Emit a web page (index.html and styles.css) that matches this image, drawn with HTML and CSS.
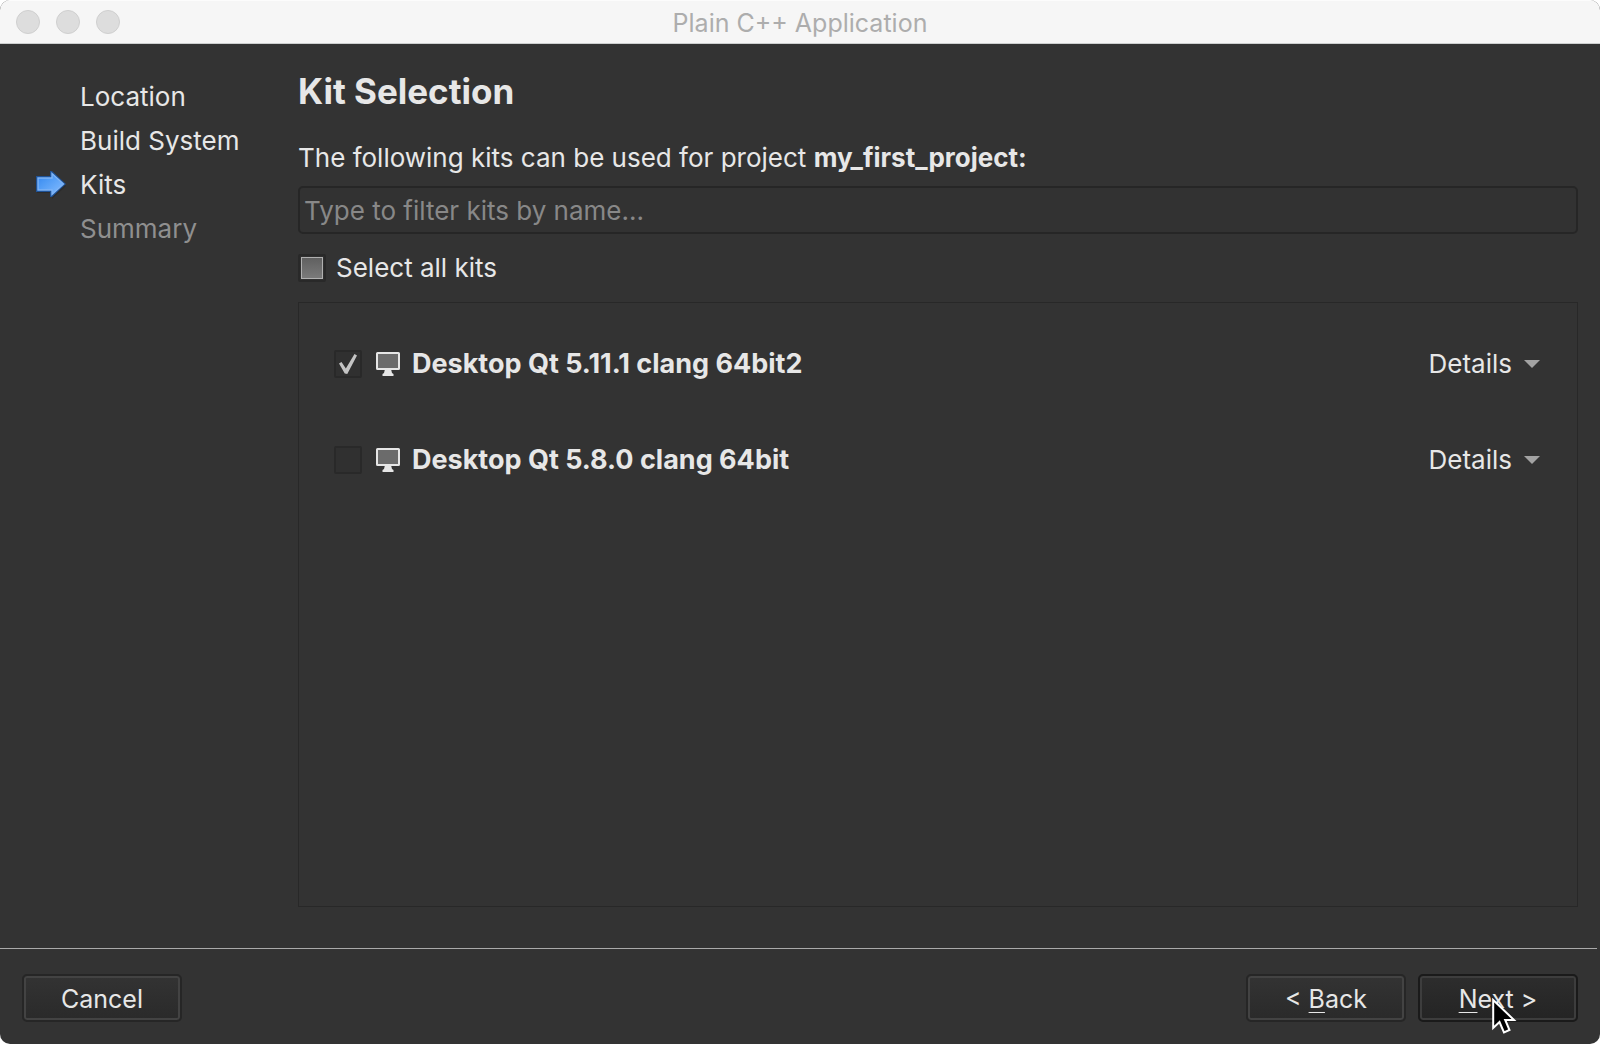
FILE: index.html
```html
<!DOCTYPE html>
<html lang="en">
<head>
<meta charset="utf-8">
<meta name="viewport" content="width=device-width, initial-scale=1">
<title>Plain C++ Application</title>
<link rel="stylesheet" href="styles.css">
</head>
<body>
<div class="window">
  <header class="titlebar">
    <div class="lights"><span class="light"></span><span class="light"></span><span class="light"></span></div>
    <div class="window-title">Plain C++ Application</div>
  </header>
  <div class="body">
    <nav class="steps" aria-label="Wizard steps">
      <ol class="step-list">
        <li class="step">Location</li>
        <li class="step">Build System</li>
        <li class="step current" aria-current="step">
          <svg class="step-arrow" width="32" height="30" viewBox="0 1 32 30" aria-hidden="true">
            <defs><linearGradient id="arrow-fill" x1="0" y1="0" x2="1" y2="1"><stop offset="0" stop-color="#3385ef"/><stop offset="0.35" stop-color="#4f9bf5"/><stop offset="1" stop-color="#86bdff"/></linearGradient></defs>
            <path d="M1 10H15V5L30 17L16 30V24H1Z" fill="#242424" opacity="0.5"/>
            <path d="M0 7H14V2H16L30 15L16 28H14V23H0Z" fill="#1f5296"/>
            <path d="M2 9H16V4.500L27.500 15L16 25.500V21H2Z" fill="url(#arrow-fill)" stroke="#7fb4f5" stroke-width="1.400"/>
          </svg>
          Kits
        </li>
        <li class="step pending">Summary</li>
      </ol>
    </nav>
    <main class="page">
      <h1 class="heading">Kit Selection</h1>
      <label class="intro" for="filter">The following kits can be used for project <b>my_first_project:</b></label>
      <input class="filter" id="filter" type="text" placeholder="Type to filter kits by name...">
      <div class="select-all">
        <input class="check" type="checkbox" id="all">
        <label for="all">Select all kits</label>
      </div>
      <ul class="kits">
        <li class="kit">
          <input class="check" type="checkbox" id="kit-1" checked>
          <label class="kit-name" for="kit-1">
            <svg class="monitor" width="24" height="24" viewBox="0 0 24 24" aria-hidden="true"><rect x="1" y="1" width="22" height="16" rx="0.500" fill="#6b6b6b" stroke="#e6e6e6" stroke-width="2"/><path d="M9 17H15L16 21L17.500 22V24H6.500V22L8 21Z" fill="#e6e6e6"/></svg>
            Desktop Qt 5.11.1 clang 64bit2
          </label>
          <button class="details" type="button">Details <svg width="16" height="8" viewBox="0 0 16 8" aria-hidden="true"><path d="M0 0H16L8 8Z" fill="#a3a3a3"/></svg></button>
        </li>
        <li class="kit">
          <input class="check" type="checkbox" id="kit-2">
          <label class="kit-name" for="kit-2">
            <svg class="monitor" width="24" height="24" viewBox="0 0 24 24" aria-hidden="true"><rect x="1" y="1" width="22" height="16" rx="0.500" fill="#6b6b6b" stroke="#e6e6e6" stroke-width="2"/><path d="M9 17H15L16 21L17.500 22V24H6.500V22L8 21Z" fill="#e6e6e6"/></svg>
            Desktop Qt 5.8.0 clang 64bit
          </label>
          <button class="details" type="button">Details <svg width="16" height="8" viewBox="0 0 16 8" aria-hidden="true"><path d="M0 0H16L8 8Z" fill="#a3a3a3"/></svg></button>
        </li>
      </ul>
    </main>
  </div>
  <hr class="divider">
  <footer class="actions">
    <button class="btn cancel" type="button">Cancel</button>
    <button class="btn" type="button">&lt; <u>B</u>ack</button>
    <div class="next-slot">
      <button class="btn default" type="button"><u>N</u>ext &gt;</button>
      <svg class="pointer" width="25" height="38" viewBox="0 0 25 38" aria-hidden="true"><path d="M1.200 2V30L7.500 24L12 34.500L17.500 32L13.200 22H22Z" fill="#000" stroke="#fff" stroke-width="2"/></svg>
    </div>
  </footer>
</div>
<script src="script.js"></script>
</body>
</html>
```
FILE: styles.css
```css
* {
  box-sizing: border-box;
}

body {
  margin: 0;
  background: #fff;
  color: #e7e7e7;
  font: 26px/32px Inter, "Liberation Sans", sans-serif;
}

button,
input {
  margin: 0;
  color: inherit;
  font: inherit;
}

.window {
  display: flex;
  flex-direction: column;
  min-height: 100vh;
  overflow: hidden;
  border-radius: 10px;
  background: #333;
}

.titlebar {
  display: grid;
  grid-template-columns: 1fr auto 1fr;
  align-items: center;
  height: 44px;
  padding: 0 16px;
  border-top: 1px solid #fcfcfc;
  border-bottom: 1px solid #cdcfcf;
  background: #f6f6f6;
  color: #adadad;
}

.window-title {
  padding-top: 2px;
  font-size: 25px;
}

.lights {
  display: flex;
  gap: 16px;
}

.light {
  width: 24px;
  height: 24px;
  border: 1px solid #cfcfcf;
  border-radius: 50%;
  background: #ddd;
}

.body {
  display: flex;
  flex: 1;
  padding: 31px 22px 41px 36px;
}

.steps {
  flex: 0 0 262px;
}

.step-list,
.kits {
  margin: 0;
  padding: 0;
  list-style: none;
}

.step {
  display: flex;
  align-items: center;
  height: 44px;
  padding-left: 44px;
}

.current {
  gap: 12px;
  padding-left: 0;
}

.pending {
  color: #8f8f8f;
}

.page {
  display: flex;
  flex: 1;
  flex-direction: column;
}

.heading {
  margin: 0 0 35px;
  font-size: 35px;
  font-weight: 700;
  line-height: 32px;
}

.intro {
  margin-bottom: 12px;
}

.filter {
  width: 100%;
  height: 48px;
  padding: 0 4px;
  border: 2px solid #262626;
  border-radius: 5px;
  background: #323232;
}

.filter::placeholder {
  color: #888;
  opacity: 1;
}

.select-all {
  display: flex;
  align-items: center;
  gap: 10px;
  padding: 18px 0;
}

.check {
  display: grid;
  place-content: center;
  width: 28px;
  height: 28px;
  border: 2px solid #292929;
  border-radius: 2px;
  background: #303030;
  appearance: none;
}

.check:indeterminate::before {
  width: 20px;
  height: 20px;
  border: 1px solid #b0b0b0;
  background: linear-gradient(#606060, #7a7a7a);
  content: "";
}

.check:checked::before {
  width: 18px;
  height: 20px;
  background: #c4c4c4;
  clip-path: polygon(0 48%, 14% 40%, 38% 72%, 86% 0, 100% 7%, 46% 100%, 32% 98%);
  content: "";
}

.kits {
  flex: 1;
  padding: 13px 37px 13px 35px;
  border: 1px solid #282828;
}

.kit {
  display: flex;
  align-items: center;
  gap: 14px;
  height: 96px;
}

.kit-name {
  display: flex;
  flex: 1;
  align-items: center;
  gap: 12px;
  font-size: 27px;
  font-weight: 700;
}

.details {
  display: flex;
  align-items: center;
  gap: 12px;
  padding: 0;
  border: 0;
  background: none;
}

.divider {
  width: calc(100% - 3px);
  height: 1px;
  margin: 0;
  border: 0;
  background: #aaa;
}

.actions {
  display: flex;
  gap: 12px;
  padding: 25px 22px 22px;
}

.btn {
  width: 160px;
  height: 48px;
  padding: 2px 0 0;
  border: 2px solid #262626;
  border-radius: 5px;
  background: linear-gradient(#333, #2a2a2a);
  box-shadow: inset 0 0 0 2px #434343;
  font-size: 25px;
}

.default {
  border-color: #1a1a1a;
  background: linear-gradient(#2d2d2d, #242424);
  box-shadow: inset 0 0 0 2px #3d3d3d;
}

.btn u {
  text-decoration-thickness: 1px;
  text-decoration-skip-ink: none;
  text-underline-offset: 4px;
}

.cancel {
  margin-right: auto;
}

.next-slot {
  position: relative;
}

.pointer {
  position: absolute;
  top: 24px;
  left: 74px;
}
```
FILE: script.js
```js
const all = document.getElementById("all");
const kits = [...document.querySelectorAll(".kit .check")];

function syncAll() {
  const picked = kits.filter((kit) => kit.checked).length;
  all.checked = picked === kits.length;
  all.indeterminate = picked > 0 && picked < kits.length;
}

all.addEventListener("change", () => {
  kits.forEach((kit) => { kit.checked = all.checked; });
});
kits.forEach((kit) => kit.addEventListener("change", syncAll));
syncAll();
```
